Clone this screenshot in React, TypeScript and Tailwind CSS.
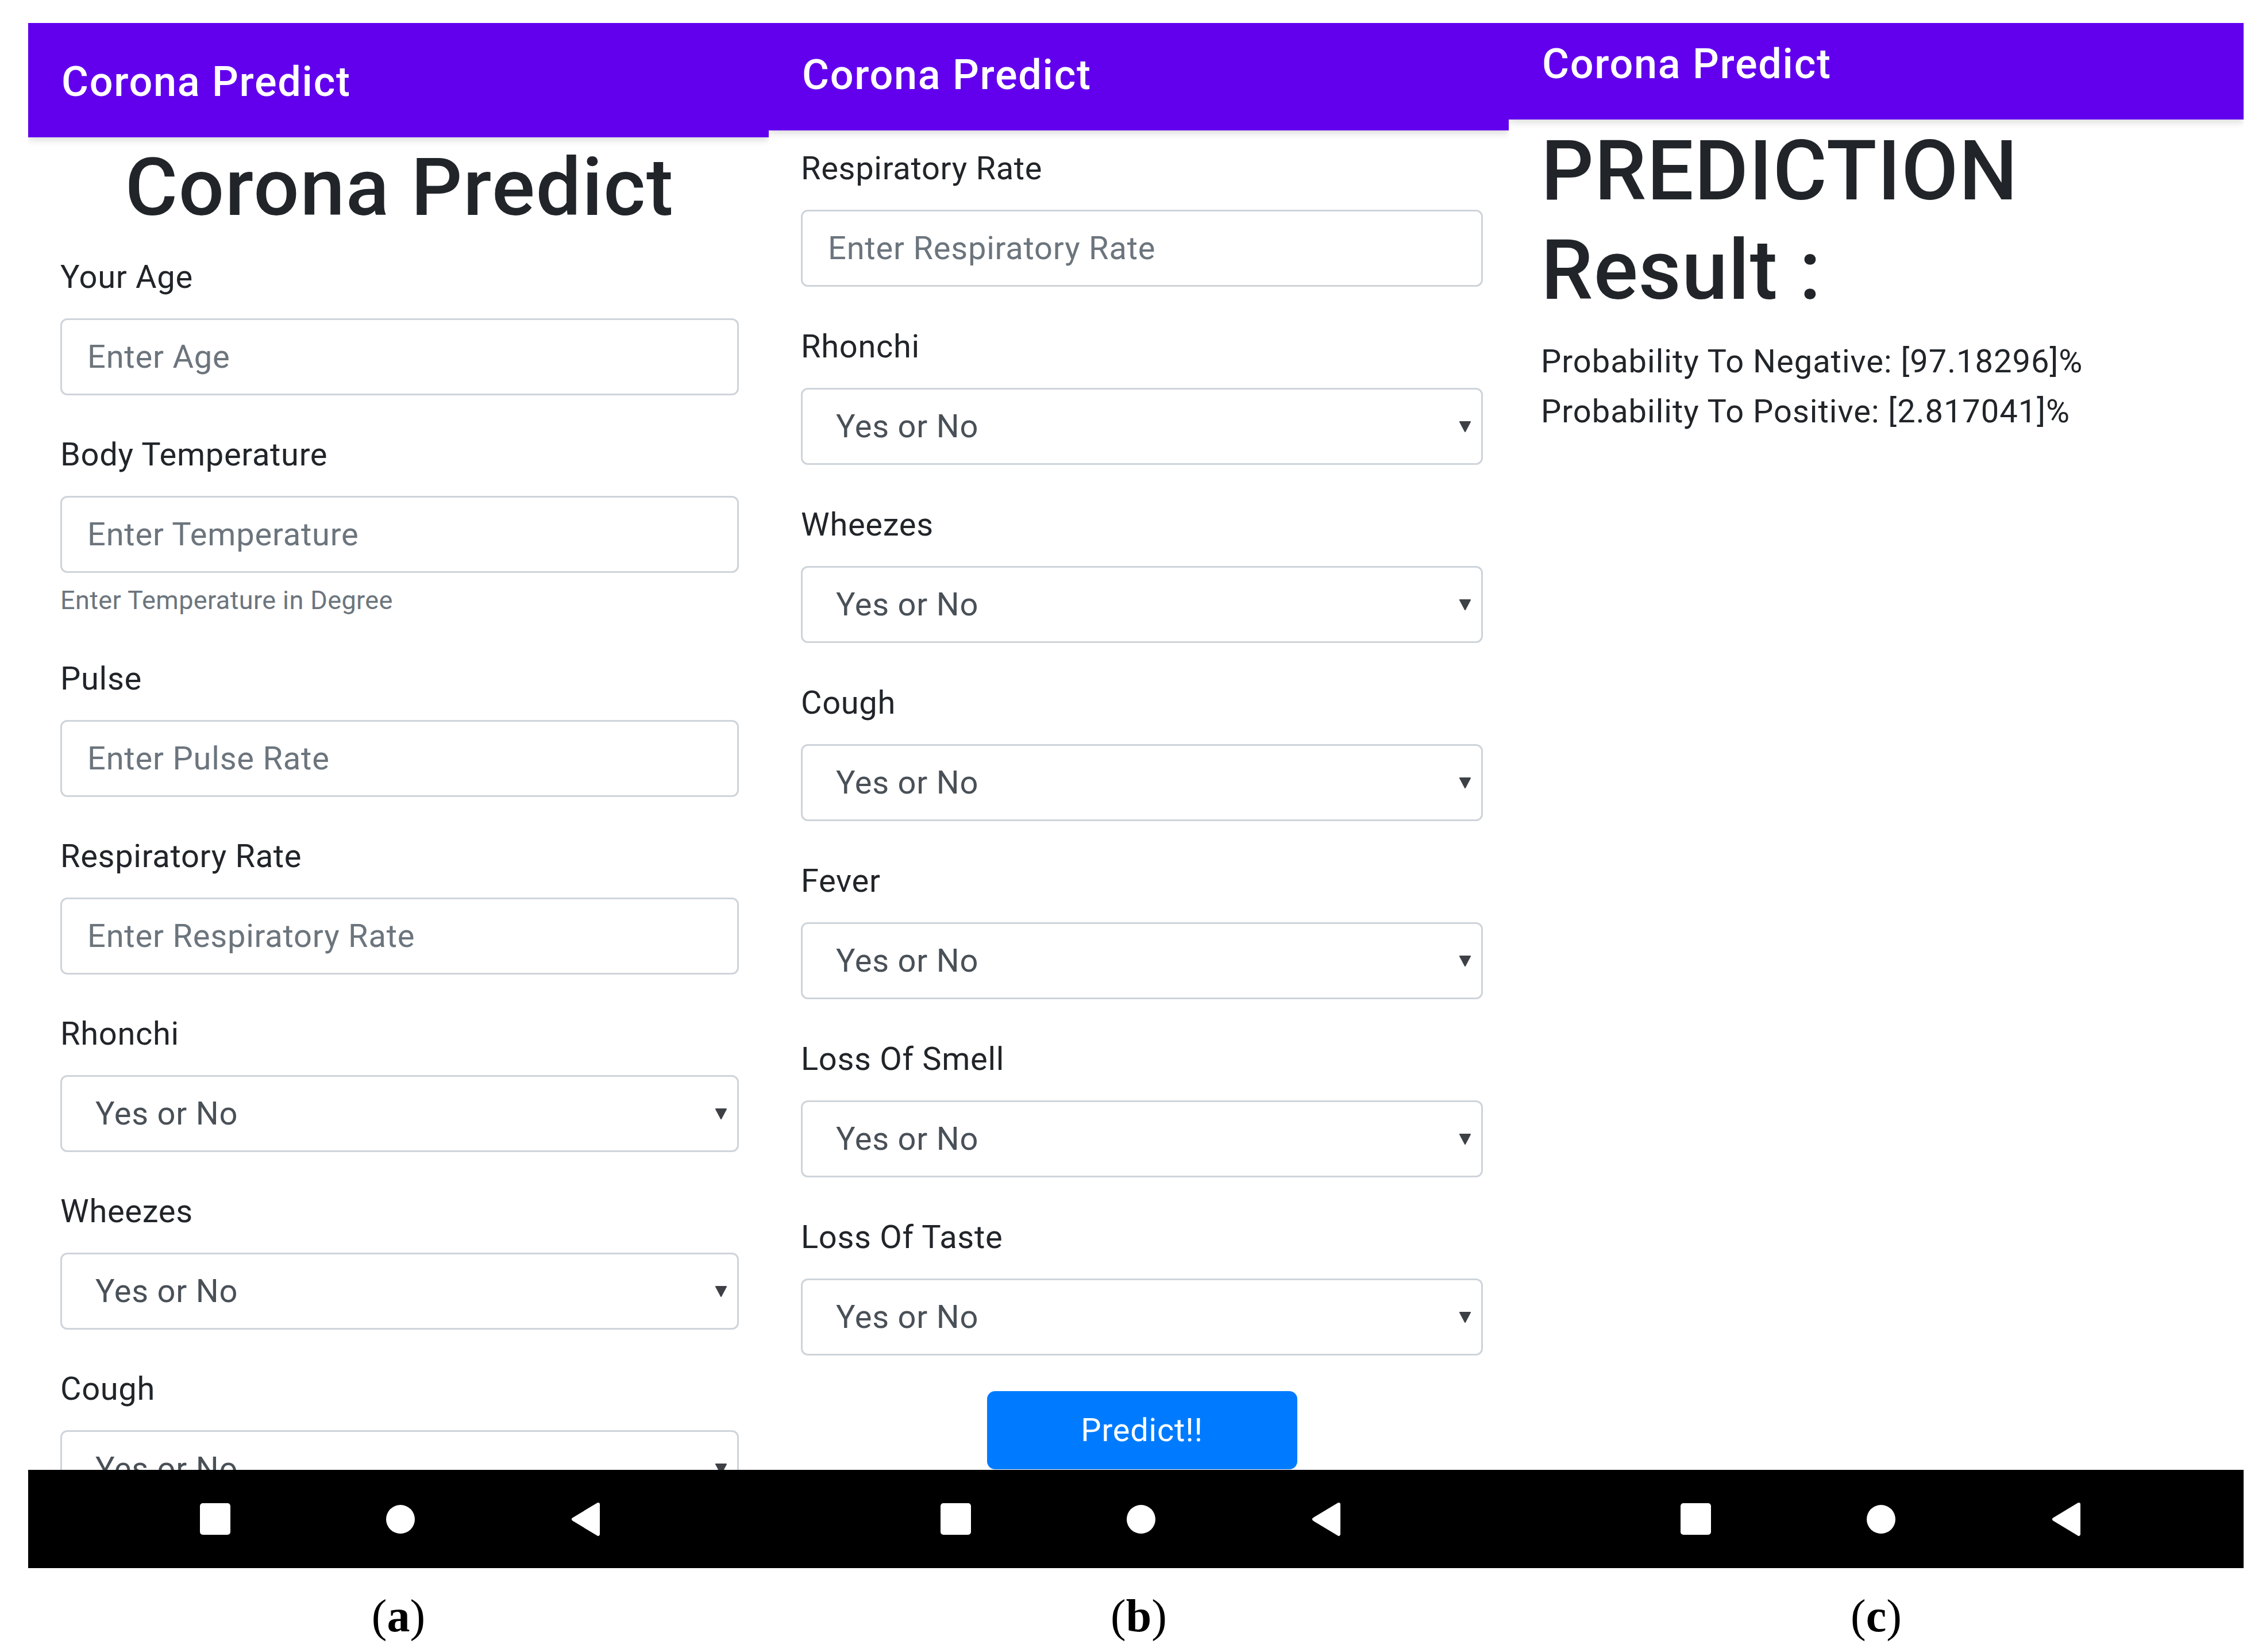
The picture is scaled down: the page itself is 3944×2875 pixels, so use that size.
import type { ReactNode } from 'react';

function AppBar({ height }: { height: string }) {
    return (
        <div className={`relative z-10 flex shrink-0 items-end bg-[#6200ee] pb-[60px] pl-[58px] shadow-[0_5px_12px_rgba(0,0,0,0.14)] ${height}`}>
            <span className="text-[72px] leading-[72px] font-medium tracking-[1.7px] text-white">Corona Predict</span>
        </div>
    );
}

function NavBar() {
    return (
        <div className="flex h-[171px] shrink-0 items-center gap-[263px] bg-black pl-[295px]">
            <div className="flex w-[60px] justify-center">
                <div className="h-[55px] w-[53px] rounded-[5px] bg-white" />
            </div>
            <div className="flex w-[60px] justify-center">
                <div className="h-[50px] w-[50px] rounded-full bg-white" />
            </div>
            <div className="flex w-[60px] justify-center">
                <svg width="54" height="60" viewBox="0 0 54 60">
                    <path d="M48 4 L5 30 L48 56 Z" fill="white" stroke="white" strokeWidth="6" strokeLinejoin="round" />
                </svg>
            </div>
        </div>
    );
}

function Field({ label, spacing, children }: { label: string; spacing: string; children: ReactNode }) {
    return (
        <div className={spacing}>
            <div className="mb-[30px] text-[56px] leading-[84px] tracking-[0.7px] text-[#212529]">{label}</div>
            {children}
        </div>
    );
}

function TextInput({ placeholder }: { placeholder: string }) {
    return (
        <input
            readOnly
            placeholder={placeholder}
            className="block h-[134px] w-full rounded-[12px] border-[3px] border-[#ced4da] bg-white px-[44px] text-[56px] tracking-[0.8px] text-[#495057] outline-none placeholder:text-[#6c757d]"
        />
    );
}

function SelectBox() {
    return (
        <div className="flex h-[134px] w-full items-center justify-between rounded-[12px] border-[3px] border-[#ced4da] bg-white pl-[58px] pr-[17px] text-[56px] tracking-[0.8px] text-[#495057]">
            <span>Yes or No</span>
            <svg width="22" height="22" viewBox="0 0 22 22">
                <path d="M2 3 H20 L11 20 Z" fill="#3d4146" stroke="#3d4146" strokeWidth="2" strokeLinejoin="round" />
            </svg>
        </div>
    );
}

function Caption({ letter }: { letter: string }) {
    return (
        <div className="mt-[43px] text-center font-['Liberation_Serif',serif] text-[80px] leading-[80px] text-black">
            (<span className="font-bold">{letter}</span>)
        </div>
    );
}

export default function App() {
    const a = 'mb-[61px]';
    const b = 'mb-[62px]';
    return (
        <div className="min-h-screen bg-white pl-[49px] pt-[40px] font-[Roboto,sans-serif]">
            <div className="flex">
                {/* (a) first screen */}
                <div className="w-[1289px]">
                    <div className="flex h-[2689px] flex-col overflow-hidden">
                        <AppBar height="h-[199px]" />
                        <div className="flex-1 overflow-hidden bg-white pl-[56px] pr-[52px]">
                            <h1 className="mb-[30px] mt-[3px] text-center text-[140px] leading-[168px] font-medium tracking-[1.6px] text-[#212529]">Corona Predict</h1>
                            <Field label="Your Age" spacing={a}>
                                <TextInput placeholder="Enter Age" />
                            </Field>
                            <Field label="Body Temperature" spacing={a}>
                                <TextInput placeholder="Enter Temperature" />
                                <div className="mt-[14px] text-[45px] leading-[67px] tracking-[0.4px] text-[#6c757d]">Enter Temperature in Degree</div>
                            </Field>
                            <Field label="Pulse" spacing={a}>
                                <TextInput placeholder="Enter Pulse Rate" />
                            </Field>
                            <Field label="Respiratory Rate" spacing={a}>
                                <TextInput placeholder="Enter Respiratory Rate" />
                            </Field>
                            <Field label="Rhonchi" spacing={a}>
                                <SelectBox />
                            </Field>
                            <Field label="Wheezes" spacing={a}>
                                <SelectBox />
                            </Field>
                            <Field label="Cough" spacing={a}>
                                <SelectBox />
                            </Field>
                        </div>
                        <NavBar />
                    </div>
                    <Caption letter="a" />
                </div>

                {/* (b) scrolled form */}
                <div className="w-[1288px]">
                    <div className="flex h-[2689px] flex-col overflow-hidden">
                        <AppBar height="h-[187px]" />
                        <div className="flex-1 overflow-hidden bg-white pl-[56px] pr-[45px] pt-[24px]">
                            <Field label="Respiratory Rate" spacing={b}>
                                <TextInput placeholder="Enter Respiratory Rate" />
                            </Field>
                            {['Rhonchi', 'Wheezes', 'Cough', 'Fever', 'Loss Of Smell', 'Loss Of Taste'].map((name) => (
                                <Field key={name} label={name} spacing={b}>
                                    <SelectBox />
                                </Field>
                            ))}
                            <button className="mx-auto flex h-[136px] w-[540px] items-center justify-center rounded-[14px] bg-[#007bff] text-[56px] tracking-[0.8px] text-white">
                                Predict!!
                            </button>
                        </div>
                        <NavBar />
                    </div>
                    <Caption letter="b" />
                </div>

                {/* (c) result */}
                <div className="w-[1279px]">
                    <div className="flex h-[2689px] flex-col overflow-hidden">
                        <AppBar height="h-[168px]" />
                        <div className="flex-1 overflow-hidden bg-white pl-[56px] pr-[40px]">
                            <h1 className="mb-[29px] mt-[3px] text-[144px] leading-[173px] font-medium tracking-[1px] text-[#212529]">
                                PREDICTION
                                <br />
                                Result :
                            </h1>
                            <p className="text-[56px] leading-[87px] tracking-[1px] text-[#212529]">Probability To Negative: [97.18296]%</p>
                            <p className="text-[56px] leading-[87px] tracking-[1px] text-[#212529]">Probability To Positive: [2.817041]%</p>
                        </div>
                        <NavBar />
                    </div>
                    <Caption letter="c" />
                </div>
            </div>
        </div>
    );
}
